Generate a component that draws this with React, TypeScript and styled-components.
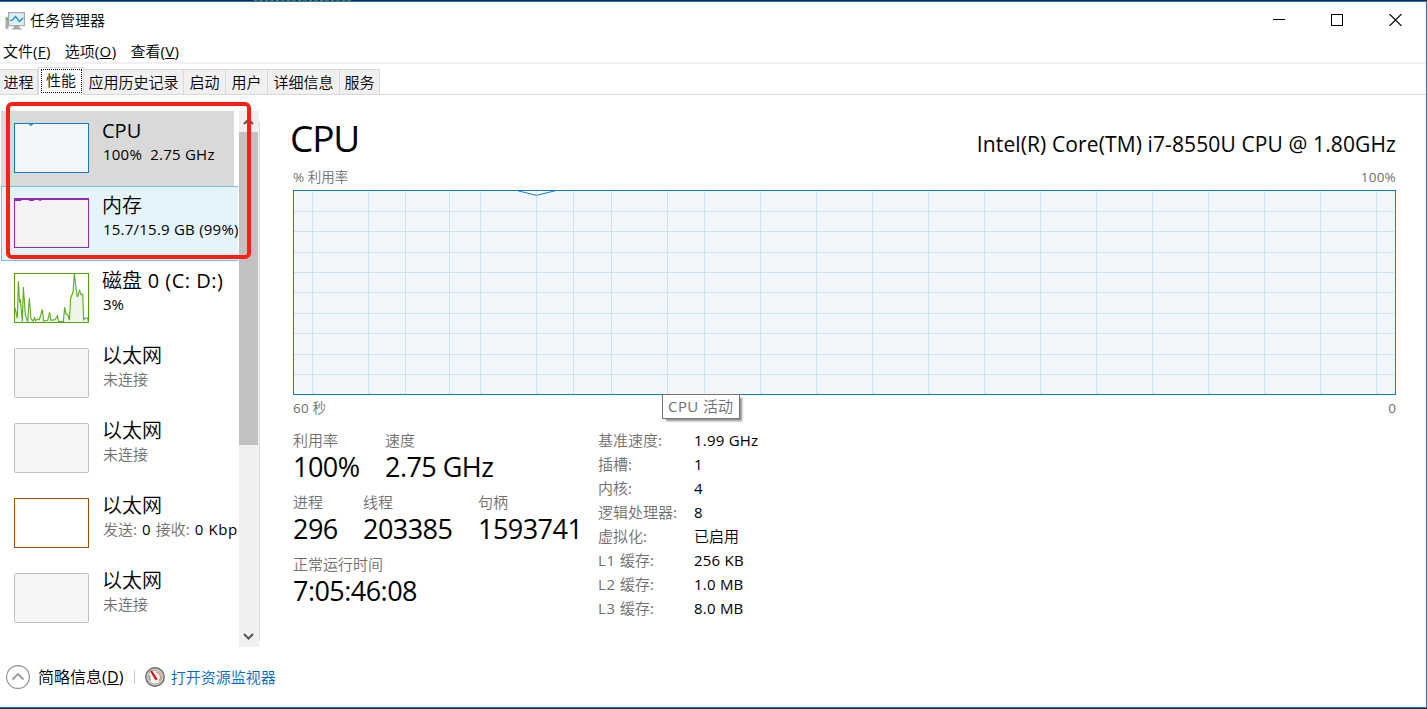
import React from "react";
import styled, { createGlobalStyle } from "styled-components";

const GlobalStyle = createGlobalStyle`
  * { box-sizing: border-box; }
  html, body { margin: 0; padding: 0; background: #fff; overflow: hidden; }
  body {
    font-family: "Open Sans", "Noto Sans CJK SC DemiLight", "Noto Sans CJK SC", sans-serif;
    font-size: 15px;
    line-height: 24px;
    color: #000;
    white-space: nowrap;
  }
`;

const Window = styled.div`
  position: relative;
  display: flex;
  flex-direction: column;
  width: 1427px;
  height: 709px;
  background: #fff;
  overflow: hidden;
`;

const Backdrop = styled.div`
  flex: none;
  height: 1px;
  padding-left: 254px;
  background: #22252b;
`;

const BackdropText = styled.div`
  width: 98px;
  height: 1px;
  background: repeating-linear-gradient(90deg, #7d7a22 0 3px, #33342a 3px 5px, #6b681f 5px 9px, #22252b 9px 11px);
`;

const Frame = styled.div`
  flex: 1;
  min-height: 0;
  display: flex;
  flex-direction: column;
  border: 1px solid #0f7bd0;
  border-left: 0;
`;

const Latin = styled.span<{ $track?: number }>`
  letter-spacing: ${(p) => p.$track ?? 0.015}em;
`;

const TitleBar = styled.header`
  display: flex;
  justify-content: space-between;
  height: 37px;
  padding: 6px 24px 0 5px;
`;

const AppTitle = styled.div`
  display: flex;
  gap: 5px;
  svg { margin-top: 4px; }
`;

const WindowButtons = styled.div`
  display: flex;
  gap: 46px;
  padding-top: 6px;
`;

const MenuBar = styled.nav`
  display: flex;
  gap: 14px;
  box-sizing: content-box;
  height: 23px;
  padding: 0 3px;
  border-bottom: 2px solid #f0f0f0;
`;

const TabStrip = styled.div`
  display: flex;
  align-items: flex-end;
  height: 31px;
  border-bottom: 1px solid #d9d9d9;
`;

const Tab = styled.div<{ $width: number }>`
  width: ${(p) => p.$width}px;
  height: 25px;
  text-align: center;
  line-height: 24px;
  background: #f0f0f0;
  border-top: 1px solid #d9d9d9;
  border-right: 1px solid #d9d9d9;
`;

const ActiveTab = styled(Tab)`
  height: 28px;
  margin-bottom: -1px;
  padding: 1px 1px 2px 2px;
  background: #fff;
  border-left: 1px solid #d9d9d9;
  span {
    display: block;
    height: 24px;
    padding-right: 1px;
    line-height: 21px;
    border: 1px dotted #000;
  }
`;

const Body = styled.div`
  flex: 1;
  min-height: 0;
  display: flex;
`;

const Sidebar = styled.aside`
  display: flex;
  gap: 1px;
  width: 260px;
  height: 552px;
  padding: 16px 0 0 1px;
`;

const ResourceList = styled.div`
  width: 237px;
  height: 536px;
  overflow: hidden;
`;

const Resource = styled.div<{ $state?: "selected" | "hover" }>`
  display: flex;
  gap: 14px;
  width: ${(p) => (p.$state === "selected" ? 233 : 237)}px;
  height: 75px;
  padding: ${(p) => (p.$state === "hover" ? "5px 0 0 12px" : "6px 0 0 13px")};
  overflow: hidden;
  background: ${(p) => (p.$state === "selected" ? "#d9d9d9" : p.$state === "hover" ? "#e5f3fb" : "#fff")};
  ${(p) => p.$state === "hover" && "border: 1px solid #70c0e7; border-right: 0;"}
  > svg { flex: none; margin-top: 6px; }
`;

const ResourceName = styled.div`
  margin-left: -1px;
  font-size: 20px;
  line-height: 27px;
`;

const ResourceInfo = styled.div<{ $muted?: boolean }>`
  line-height: 20px;
  color: ${(p) => (p.$muted ? "#707070" : "#000")};
`;

const Muted = styled.span`
  color: #707070;
`;

const ScrollBar = styled.div`
  display: flex;
  flex-direction: column;
  justify-content: space-between;
  width: 20px;
  height: 536px;
  background: #f0f0f0;
`;

const ScrollThumb = styled.div`
  width: 19px;
  height: 313px;
  background: #c1c1c1;
`;

const ScrollButton = styled.div`
  display: flex;
  justify-content: center;
  align-items: center;
  width: 19px;
  height: 21px;
`;

const ScrollTop = styled.div``;

const PaneDivider = styled.div`
  flex: none;
  width: 1px;
  height: 519px;
  margin-top: 27px;
  margin-left: -1px;
  background: #dcdcdc;
`;

const Detail = styled.main`
  display: flex;
  flex-direction: column;
  width: 1103px;
  margin-left: 33px;
  padding-top: 18px;
`;

const DetailHead = styled.div`
  display: flex;
  justify-content: space-between;
  align-items: baseline;
  height: 54px;
`;

const DetailTitle = styled.h1`
  margin: 0 0 0 -3px;
  font-size: 37px;
  font-weight: 400;
  line-height: 50px;
  letter-spacing: -0.03em;
`;

const Processor = styled.div`
  font-size: 21px;
  line-height: 30px;
  letter-spacing: 0.0055em;
`;

const AxisRow = styled.div`
  display: flex;
  justify-content: space-between;
  height: 23px;
  font-size: 13.5px;
  line-height: 20px;
  color: #707070;
`;

const ChartBox = styled.div`
  position: relative;
  height: 208px;
  svg { display: block; }
`;

const Tooltip = styled.div`
  position: absolute;
  left: 369px;
  top: 204px;
  width: 78px;
  height: 25px;
  padding-left: 5px;
  line-height: 23px;
  color: #707070;
  background: #fff;
  border: 1px solid #767676;
  box-shadow: 3px 3px 2px -1px rgba(0, 0, 0, 0.45);
`;

const Stats = styled.div`
  display: flex;
  padding-top: 7px;
`;

const StatGroups = styled.div`
  display: flex;
  flex-direction: column;
  gap: 10px;
  width: 305px;
`;

const StatRow = styled.div`
  display: flex;
`;

const Stat = styled.div<{ $width?: number }>`
  width: ${(p) => (p.$width ? p.$width + "px" : "auto")};
  color: #707070;
`;

const StatValue = styled.div`
  height: 28px;
  font-size: 27px;
  line-height: 30px;
  letter-spacing: -0.02em;
  color: #000;
`;

const Specs = styled.dl`
  display: grid;
  grid-template-columns: 96px auto;
  align-content: start;
  margin: 0;
  dt { color: #707070; }
  dd { margin: 0; }
`;

const Footer = styled.footer`
  display: flex;
  align-items: center;
  height: 61px;
  padding-left: 6px;
`;

const FewerDetails = styled.div`
  display: flex;
  align-items: center;
  gap: 8px;
  font-size: 16px;
`;

const FooterDivider = styled.div`
  width: 1px;
  height: 14px;
  margin: 0 10px;
  background: #c8c8c8;
`;

const MonitorLink = styled.a`
  display: flex;
  align-items: center;
  gap: 6px;
  color: #0066cc;
`;

const Highlight = styled.div`
  position: absolute;
  left: 6px;
  top: 102px;
  width: 245px;
  height: 157px;
  border: 4px solid #ff2014;
  border-radius: 6px;
`;

const DISK =
  "45,145 52,175 55,65 59,130 61,118 67,185 70,82 76,165 83,186 88,115 93,178 100,184 103,174 107,183 113,178 118,180 127,149 131,184 143,182 149,158 153,182 165,180 172,168 176,186 190,186 194,142 198,163 203,164 208,182 212,115 219,98 223,42 228,85 232,112 239,92 243,105 248,103 251,180 256,175 263,175 265,186";

type Kind = "cpu" | "memory" | "disk" | "idle" | "ethernet";

function Thumb({ kind }: { kind: Kind }) {
  const look = {
    cpu: ["#117dbb", "#f1f6fa"],
    memory: ["#9528b4", "#f4f2f4"],
    disk: ["#4da60c", "#fff"],
    idle: ["#bfbfbf", "#f5f5f5"],
    ethernet: ["#a74f01", "#fff"],
  }[kind];
  return (
    <svg width="75" height="50">
      <rect x=".5" y=".5" width="74" height="49" rx={kind === "idle" ? 1 : 0} fill={look[1]} stroke={look[0]} />
      {kind === "cpu" && <path d="M15 1l2 2 2-2z" fill="#6cabd2" stroke="#117dbb" strokeWidth=".6" />}
      {kind === "memory" && (
        <path d="M1 1.500h73M1 2.500h6l1-1h6l2 1h3l2-1h3l2 1 2-1" fill="none" stroke={look[0]} />
      )}
      {kind === "disk" && (
        <svg width="75" height="50" viewBox="42 40 225 150">
          <polygon points={`45,187 ${DISK} 265,187`} fill="#eef6e8" />
          <polyline points={DISK} fill="none" stroke={look[0]} strokeWidth="3.4" strokeOpacity=".9" />
        </svg>
      )}
    </svg>
  );
}

function IdleEthernet() {
  return (
    <Resource>
      <Thumb kind="idle" />
      <div>
        <ResourceName>以太网</ResourceName>
        <ResourceInfo $muted>未连接</ResourceInfo>
      </div>
    </Resource>
  );
}

const GRID_X = [19, 75, 112, 156, 187, 243, 280, 318, 374, 411, 467, 523, 579, 635, 691, 747, 803, 859, 915, 971, 1027, 1083];
const GRID_Y = [21, 41, 62, 82, 102, 123, 143, 164, 184];

function UsageChart() {
  return (
    <svg width="1103" height="205" shapeRendering="crispEdges">
      <rect x=".5" y=".5" width="1102" height="204" fill="#f1f6fa" />
      <path
        d={GRID_X.map((x) => `M${x + 0.5} 1V204`).join("") + GRID_Y.map((y) => `M1 ${y + 0.5}H1101`).join("")}
        stroke="#cee3ef"
        fill="none"
      />
      <path d="M225 1l18.500 4.500 18-4.500z" fill="#fff" />
      <path d="M243.500 1v3" stroke="#cee3ef" />
      <path d="M225 .8l18.500 4.500L262 .8" fill="none" stroke="#117dbb" shapeRendering="auto" />
      <rect x=".5" y=".5" width="1102" height="204" fill="none" stroke="#117dbb" />
    </svg>
  );
}

function TaskManagerIcon() {
  return (
    <svg width="20" height="18">
      <rect x=".5" y="5" width="3" height="12" fill="#a9adb0" />
      <rect x="1" y="6" width="2" height="2" fill="#3fd435" />
      <path d="M9 14h5l1 2 3 1.500H6L8.500 16z" fill="#a3a6a8" />
      <rect x="3.600" y=".6" width="15.800" height="13" fill="#eceeef" stroke="#a6a9ac" strokeWidth="1.200" />
      <rect x="5" y="2" width="13" height="10" fill="#d9effa" />
      <path d="M5 8.500l2.500-.5 3-3.500 4 5 3.500-3.500" fill="none" stroke="#1487c4" strokeWidth="1.200" />
    </svg>
  );
}

function GaugeIcon() {
  return (
    <svg width="20" height="20">
      <circle cx="10" cy="10" r="9.200" fill="#d6d6d2" stroke="#686868" strokeWidth="1.400" />
      <circle cx="10" cy="10" r="7" fill="#f5f4f1" stroke="#a9a9a5" />
      <path d="M5.500 13.500A5.500 5.500 0 0 1 5 8" fill="none" stroke="#8e9a8e" strokeWidth="1.300" />
      <path d="M11 4.800a5.500 5.500 0 0 1 3.300 9" fill="none" stroke="#e0906c" strokeWidth="1.300" />
      <path d="M5 4l2-.5 5.500 8.500-2 1.500z" fill="#d0141c" />
    </svg>
  );
}

const MENUS = [["文件", "F"], ["选项", "O"], ["查看", "V"]];

const SPECS: [React.ReactNode, React.ReactNode][] = [
  ["基准速度:", <Latin>1.99 GHz</Latin>],
  ["插槽:", "1"],
  ["内核:", "4"],
  ["逻辑处理器:", "8"],
  ["虚拟化:", "已启用"],
  [<><Latin $track={0.04}>L1 </Latin>缓存:</>, <Latin>256 KB</Latin>],
  [<><Latin $track={0.04}>L2 </Latin>缓存:</>, <Latin>1.0 MB</Latin>],
  [<><Latin $track={0.04}>L3 </Latin>缓存:</>, <Latin>8.0 MB</Latin>],
];

export default function App() {
  return (
    <Window>
      <GlobalStyle />
      <Backdrop><BackdropText /></Backdrop>
      <Frame>
        <TitleBar>
          <AppTitle><TaskManagerIcon />任务管理器</AppTitle>
          <WindowButtons>
            <svg width="12" height="12" shapeRendering="crispEdges"><path d="M0 5.500h12" stroke="#000" /></svg>
            <svg width="12" height="12" shapeRendering="crispEdges"><rect x=".5" y=".5" width="11" height="11" fill="none" stroke="#000" /></svg>
            <svg width="13" height="12"><path d="M.5 0l12 12M12.500 0L.5 12" stroke="#000" strokeWidth="1.100" /></svg>
          </WindowButtons>
        </TitleBar>
        <MenuBar>
          {MENUS.map(([name, key]) => (
            <div key={key}>{name}<Latin $track={0.025}>(<u>{key}</u>)</Latin></div>
          ))}
        </MenuBar>
        <TabStrip>
          <Tab $width={38}>进程</Tab>
          <ActiveTab $width={46}><span>性能</span></ActiveTab>
          <Tab $width={100}>应用历史记录</Tab>
          <Tab $width={42}>启动</Tab>
          <Tab $width={42}>用户</Tab>
          <Tab $width={72}>详细信息</Tab>
          <Tab $width={40}>服务</Tab>
        </TabStrip>
        <Body>
          <Sidebar>
            <ResourceList>
              <Resource $state="selected">
                <Thumb kind="cpu" />
                <div>
                  <ResourceName><Latin $track={0}>CPU</Latin></ResourceName>
                  <ResourceInfo><Latin>100%{"\u00a0"} 2.75 GHz</Latin></ResourceInfo>
                </div>
              </Resource>
              <Resource $state="hover">
                <Thumb kind="memory" />
                <div>
                  <ResourceName>内存</ResourceName>
                  <ResourceInfo><Latin>15.7/15.9 GB (99%)</Latin></ResourceInfo>
                </div>
              </Resource>
              <Resource>
                <Thumb kind="disk" />
                <div>
                  <ResourceName>磁盘<Latin $track={0.025}> 0 (C: D:)</Latin></ResourceName>
                  <ResourceInfo><Latin $track={0}>3%</Latin></ResourceInfo>
                </div>
              </Resource>
              <IdleEthernet />
              <IdleEthernet />
              <Resource>
                <Thumb kind="ethernet" />
                <div>
                  <ResourceName>以太网</ResourceName>
                  <ResourceInfo>
                    <Muted>发送<Latin $track={0.04}>: </Latin></Muted><Latin $track={0.04}>0 </Latin>
                    <Muted>接收<Latin $track={0.04}>: </Latin></Muted><Latin $track={0.04}>0 Kbps</Latin>
                  </ResourceInfo>
                </div>
              </Resource>
              <IdleEthernet />
            </ResourceList>
            <ScrollBar>
              <ScrollTop>
                <ScrollButton>
                  <svg width="11" height="7"><path d="M1 6l4.500-4.500L10 6" fill="none" stroke="#555" strokeWidth="2" /></svg>
                </ScrollButton>
                <ScrollThumb />
              </ScrollTop>
              <ScrollButton>
                <svg width="11" height="7"><path d="M1 1l4.500 4.500L10 1" fill="none" stroke="#555" strokeWidth="2" /></svg>
              </ScrollButton>
            </ScrollBar>
          </Sidebar>
          <PaneDivider />
          <Detail>
            <DetailHead>
              <DetailTitle>CPU</DetailTitle>
              <Processor>Intel(R) Core(TM) i7-8550U CPU @ 1.80GHz</Processor>
            </DetailHead>
            <AxisRow>
              <span>% 利用率</span>
              <Latin>100%</Latin>
            </AxisRow>
            <ChartBox>
              <UsageChart />
              <Tooltip><Latin $track={0.03}>CPU </Latin>活动</Tooltip>
            </ChartBox>
            <AxisRow>
              <span><Latin>60 </Latin>秒</span>
              <span>0</span>
            </AxisRow>
            <Stats>
              <StatGroups>
                <StatRow>
                  <Stat $width={92}>利用率<StatValue>100%</StatValue></Stat>
                  <Stat>速度<StatValue>2.75 GHz</StatValue></Stat>
                </StatRow>
                <StatRow>
                  <Stat $width={70}>进程<StatValue>296</StatValue></Stat>
                  <Stat $width={115}>线程<StatValue>203385</StatValue></Stat>
                  <Stat>句柄<StatValue>1593741</StatValue></Stat>
                </StatRow>
                <StatRow>
                  <Stat>正常运行时间<StatValue>7:05:46:08</StatValue></Stat>
                </StatRow>
              </StatGroups>
              <Specs>
                {SPECS.map(([label, value], i) => (
                  <React.Fragment key={i}>
                    <dt>{label}</dt>
                    <dd>{value}</dd>
                  </React.Fragment>
                ))}
              </Specs>
            </Stats>
          </Detail>
        </Body>
        <Footer>
          <FewerDetails>
            <svg width="24" height="24">
              <circle cx="12" cy="12" r="11.400" fill="#fff" stroke="#8c8c8c" strokeWidth="1.100" />
              <path d="M6.500 14.500L12 9l5.500 5.500" fill="none" stroke="#9a9a9a" strokeWidth="1.800" />
            </svg>
            <span>简略信息<Latin>(<u>D</u>)</Latin></span>
          </FewerDetails>
          <FooterDivider />
          <MonitorLink><GaugeIcon />打开资源监视器</MonitorLink>
        </Footer>
      </Frame>
      <Backdrop />
      <Highlight />
    </Window>
  );
}
